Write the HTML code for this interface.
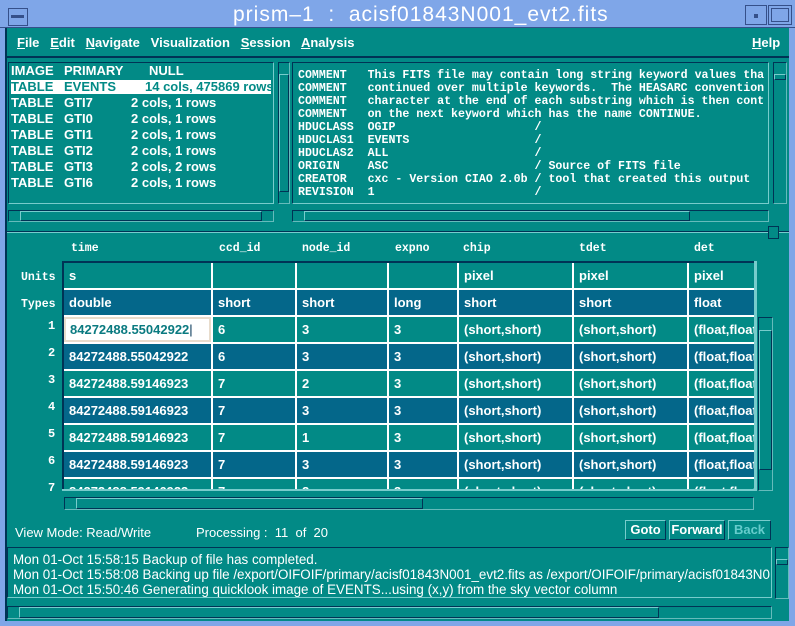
<!DOCTYPE html>
<html><head><style>
*{margin:0;padding:0;box-sizing:border-box}
body{width:795px;height:626px;overflow:hidden;background:#028a86;position:relative;font-family:"Liberation Sans",sans-serif;font-weight:bold;font-size:12px;color:#fff}
.a{position:absolute}
.pn{position:absolute;border:1px solid #7cc;border-top-color:#035;border-left-color:#035}
.sb{position:absolute;border:1px solid #6bb;border-top-color:#035;border-left-color:#035;background:#028a86}
.th{position:absolute;border:1px solid #035;border-top-color:#7cc;border-left-color:#7cc}
.t{position:absolute;white-space:pre}
.mono{font-family:"Liberation Mono",monospace;font-size:11.6px;line-height:13px}
.c{position:absolute;height:25px;line-height:25px;padding-left:5px;overflow:hidden;white-space:nowrap;font-size:13px}
.g{background:#028a86}.b{background:#04678a}
.btn{position:absolute;top:520px;height:20px;line-height:18px;text-align:center;border:1px solid #7cc;border-right-color:#035;border-bottom-color:#035;font-size:13px}
.li{position:absolute;font-size:13px;line-height:16px;white-space:pre}
</style></head><body>
<div class="a" style="left:0;top:0;width:795px;height:28px;background:#7fa6e8;border-bottom:1px solid #35508a"></div>
<div class="a" style="left:8px;top:8px;width:20px;height:18px;border:1px solid #35508a"></div>
<div class="a" style="left:11px;top:15px;width:13px;height:3px;background:#35508a"></div>
<div class="a" style="left:745px;top:5px;width:22px;height:20px;border:1px solid #35508a"></div>
<div class="a" style="left:754px;top:14px;width:4px;height:4px;background:#35508a"></div>
<div class="a" style="left:768px;top:5px;width:24px;height:20px;border:1px solid #35508a"></div>
<div class="a" style="left:771px;top:8px;width:18px;height:14px;border:1px solid #35508a"></div>
<div class="t" style="left:233px;top:3px;font-size:21px;letter-spacing:1px;font-weight:normal;color:#fff">prism–1  :  acisf01843N001_evt2.fits</div>
<div class="a" style="left:0;top:28px;width:5px;height:598px;background:#7fa6e8"></div>
<div class="a" style="left:5px;top:28px;width:2px;height:598px;background:#035"></div>
<div class="a" style="left:7px;top:56px;width:782px;height:2px;background:#035"></div>
<div class="t" style="left:17px;top:35px;font-size:13px"><u>F</u>ile   <u>E</u>dit   <u>N</u>avigate   Visualization   <u>S</u>ession   <u>A</u>nalysis</div>
<div class="t" style="left:752px;top:35px;font-size:13px"><u>H</u>elp</div>

<div class="pn" style="left:8px;top:62px;width:266px;height:142px"></div>
<div class="a" style="left:11px;top:80px;width:260px;height:14px;background:#fff"></div>
<div class="li" style="left:11px;top:63px">IMAGE
<span style="color:#028a86">TABLE</span>
TABLE
TABLE
TABLE
TABLE
TABLE
TABLE</div>
<div class="li" style="left:64px;top:63px">PRIMARY
<span style="color:#028a86">EVENTS</span>
GTI7
GTI0
GTI1
GTI2
GTI3
GTI6</div>
<div class="li" style="left:149px;top:63px">NULL</div>
<div class="li" style="left:145px;top:79px;color:#028a86">14 cols, 475869 rows</div>
<div class="li" style="left:131px;top:95px">2 cols, 1 rows
2 cols, 1 rows
2 cols, 1 rows
2 cols, 1 rows
2 cols, 2 rows
2 cols, 1 rows</div>
<div class="sb" style="left:278px;top:62px;width:12px;height:142px"></div>
<div class="th" style="left:279px;top:74px;width:10px;height:118px"></div>
<div class="pn" style="left:292px;top:62px;width:477px;height:142px;overflow:hidden">
<div class="t mono" style="left:5px;top:6px">COMMENT   This FITS file may contain long string keyword values tha
COMMENT   continued over multiple keywords.  The HEASARC convention
COMMENT   character at the end of each substring which is then cont
COMMENT   on the next keyword which has the name CONTINUE.
HDUCLASS  OGIP                    /
HDUCLAS1  EVENTS                  /
HDUCLAS2  ALL                     /
ORIGIN    ASC                     / Source of FITS file
CREATOR   cxc - Version CIAO 2.0b / tool that created this output
REVISION  1                       /</div></div>
<div class="sb" style="left:773px;top:62px;width:14px;height:142px"></div>
<div class="th" style="left:774px;top:74px;width:12px;height:6px"></div>
<div class="sb" style="left:8px;top:210px;width:266px;height:12px"></div>
<div class="th" style="left:20px;top:211px;width:242px;height:10px"></div>
<div class="sb" style="left:292px;top:210px;width:477px;height:12px"></div>
<div class="th" style="left:304px;top:211px;width:386px;height:10px"></div>
<div class="a" style="left:7px;top:231px;width:782px;height:1px;background:#035"></div>
<div class="a" style="left:7px;top:232px;width:782px;height:1px;background:#7cc"></div>
<div class="a" style="left:768px;top:226px;width:11px;height:13px;border:1px solid #035;background:#028a86"></div>

<div class="t" style="font-family:'Liberation Mono',monospace;font-size:11.5px;top:242px;left:71px">time</div>
<div class="t" style="font-family:'Liberation Mono',monospace;font-size:11.5px;top:242px;left:219px">ccd_id</div>
<div class="t" style="font-family:'Liberation Mono',monospace;font-size:11.5px;top:242px;left:302px">node_id</div>
<div class="t" style="font-family:'Liberation Mono',monospace;font-size:11.5px;top:242px;left:395px">expno</div>
<div class="t" style="font-family:'Liberation Mono',monospace;font-size:11.5px;top:242px;left:463px">chip</div>
<div class="t" style="font-family:'Liberation Mono',monospace;font-size:11.5px;top:242px;left:579px">tdet</div>
<div class="t" style="font-family:'Liberation Mono',monospace;font-size:11.5px;top:242px;left:694px">det</div>
<div class="t" style="font-family:'Liberation Mono',monospace;font-size:11.5px;top:271px;left:21px">Units</div>
<div class="t" style="font-family:'Liberation Mono',monospace;font-size:11.5px;top:298px;left:21px">Types</div>

<div class="a" style="left:62px;top:261px;width:694px;height:230px;background:#fff;border-top:2px solid #035;border-left:2px solid #035;overflow:hidden"></div>
<script>
var X=[64,213,297,389,459,574,689],W=[147,82,90,68,113,113,66];
var rows=[["s","","","","pixel","pixel","pixel"],["double","short","short","long","short","short","float"]];
var d=[["84272488.55042922","6","3"],["84272488.55042922","6","3"],["84272488.59146923","7","2"],["84272488.59146923","7","3"],["84272488.59146923","7","1"],["84272488.59146923","7","3"],["84272488.59146923","7","2"]];
d.forEach(function(r){rows.push([r[0],r[1],r[2],"3","(short,short)","(short,short)","(float,float)"])});
var h="";
rows.forEach(function(r,i){var y=263+i*27;var cl=(i%2==0)?"g":"b";
 r.forEach(function(v,j){var w=W[j];if(j==6)w=754-X[j];
  var st="left:"+X[j]+"px;top:"+y+"px;width:"+w+"px;";var c=cl;
  if(i==2&&j==0){c="";st+="background:#fff;color:#0a7a80;border:2px solid #e8dccc;line-height:21px;padding-left:4px;";v+="<span style='font-weight:normal;color:#035'>|</span>";}
  h+="<div class='c "+c+"' style='"+st+"'>"+v+"</div>";});
 if(i>=2){h+="<div class='t' style='left:48px;top:"+(y+2)+"px;font-family:Liberation Mono,monospace;font-size:12px'>"+(i-1)+"</div>";}
});
document.write(h);
</script>
<div class="a" style="left:7px;top:491px;width:782px;height:10px;background:#028a86"></div>
<div class="a" style="left:62px;top:489px;width:694px;height:2px;background:#7cc"></div>
<div class="a" style="left:754px;top:261px;width:3px;height:230px;background:#7cc"></div>
<div class="sb" style="left:758px;top:317px;width:15px;height:174px"></div>
<div class="th" style="left:759px;top:330px;width:13px;height:140px"></div>
<div class="sb" style="left:64px;top:497px;width:690px;height:13px"></div>
<div class="th" style="left:76px;top:498px;width:347px;height:11px"></div>

<div class="t" style="left:15px;top:525px;font-weight:normal;font-size:13px">View Mode: Read/Write</div>
<div class="t" style="left:196px;top:525px;font-weight:normal;font-size:13px">Processing :  11  of  20</div>
<div class="btn" style="left:625px;width:41px">Goto</div>
<div class="btn" style="left:669px;width:56px">Forward</div>
<div class="btn" style="left:728px;width:43px;color:#6cc">Back</div>
<div class="pn" style="left:7px;top:547px;width:765px;height:51px;overflow:hidden">
<div class="t" style="left:5px;top:4px;line-height:15px;font-weight:normal;font-size:13.4px">Mon 01-Oct 15:58:15 Backup of file has completed.
Mon 01-Oct 15:58:08 Backing up file /export/OIFOIF/primary/acisf01843N001_evt2.fits as /export/OIFOIF/primary/acisf01843N0
Mon 01-Oct 15:50:46 Generating quicklook image of EVENTS...using (x,y) from the sky vector column</div></div>
<div class="sb" style="left:775px;top:547px;width:14px;height:52px"></div>
<div class="th" style="left:776px;top:559px;width:12px;height:6px"></div>
<div class="sb" style="left:7px;top:606px;width:765px;height:13px"></div>
<div class="th" style="left:19px;top:607px;width:640px;height:11px"></div>
<div class="a" style="left:0;top:621px;width:795px;height:5px;background:#7fa6e8"></div>
<div class="a" style="left:789px;top:28px;width:6px;height:598px;background:#7fa6e8"></div>
</body></html>
